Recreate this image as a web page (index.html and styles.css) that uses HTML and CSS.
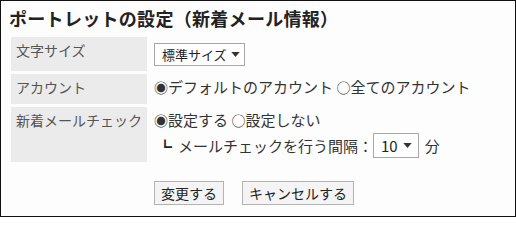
FILE: index.html
```html
<!DOCTYPE html>
<html lang="ja">
<head>
<meta charset="utf-8">
<title>ポートレットの設定</title>
<link rel="stylesheet" href="styles.css">
</head>
<body>
<div class="frame">
  <h1 class="title">ポートレットの設定（新着メール情報）</h1>
  <div class="form">
    <div class="label row1">文字サイズ</div>
    <div class="value row1">
      <span class="select sel-size"><span>標準サイズ</span><svg class="tri" width="10" height="6" viewBox="0 0 10 6"><path d="M0 0H10L5 6Z"/></svg></span>
    </div>
    <div class="label row2">アカウント</div>
    <div class="value row2"><span class="radio">◉</span>デフォルトのアカウント <span class="radio">○</span>全てのアカウント</div>
    <div class="label row3">新着メールチェック</div>
    <div class="value row3">
      <div class="line"><span class="radio">◉</span>設定する <span class="radio">○</span>設定しない</div>
      <div class="line sub"><span class="corner">┗</span><span>メールチェックを行う間隔：</span><span class="select sel-min"><span>10</span><svg class="tri" width="10" height="6" viewBox="0 0 10 6"><path d="M0 0H10L5 6Z"/></svg></span><span class="unit">分</span></div>
    </div>
  </div>
  <div class="buttons">
    <button class="btn" type="button">変更する</button>
    <button class="btn" type="button">キャンセルする</button>
  </div>
</div>
</body>
</html>
```
FILE: styles.css
```css
html, body {
  margin: 0;
  padding: 0;
  background: #fff;
}
body {
  font-family: "Noto Sans CJK JP", "Noto Sans", sans-serif;
  color: #333;
}
.frame {
  box-sizing: border-box;
  width: 516px;
  height: 217px;
  border: 1px solid #111;
  background: #fdfdfd;
  padding: 5px 0 0 8px;
}
.title {
  margin: 0;
  font-size: 18px;
  line-height: 24px;
  font-weight: bold;
  color: #222;
  letter-spacing: 0.3px;
}
.form {
  display: grid;
  grid-template-columns: 136px 1fr;
  column-gap: 3px;
  row-gap: 3px;
  margin: 7px 0 0 2px;
  width: 490px;
}
.label {
  background: #ebebeb;
  color: #555;
  font-size: 14px;
  line-height: 20px;
  padding: 3px 0 0 5px;
}
.value {
  font-size: 15px;
  line-height: 20px;
  padding: 0 0 0 4px;
  color: #333;
  white-space: nowrap;
}
.row1 { height: 34px; box-sizing: border-box; }
.row2 { height: 30px; box-sizing: border-box; }
.row3 { height: 55px; box-sizing: border-box; }
.value.row1 { padding-top: 6px; }
.value.row2 { padding-top: 3px; }
.value.row3 { padding-top: 3px; }
.radio {
  font-size: 14px;
}
.select {
  display: inline-flex;
  align-items: center;
  box-sizing: border-box;
  border: 1px solid #a8a8a8;
  background: #fff;
  color: #222;
  white-space: nowrap;
  vertical-align: middle;
}
.sel-size {
  height: 23px;
  padding: 0 4px 0 7px;
  gap: 4px;
  font-size: 13px;
}
.sel-min {
  height: 25px;
  padding: 0 6px 0 7px;
  gap: 5px;
  font-size: 15px;
}
.tri {
  width: 9px;
  height: 5px;
  fill: #333;
}
.line.sub {
  margin-top: 3px;
  padding-left: 4px;
  display: flex;
  align-items: center;
  height: 25px;
}
.corner {
  font-size: 14px;
  font-weight: bold;
  color: #222;
  margin-right: 6px;
}
.unit {
  margin-left: 6px;
}
.buttons {
  display: flex;
  gap: 18px;
  margin: 19px 0 0 145px;
}
.btn {
  box-sizing: border-box;
  height: 24px;
  padding: 0 6px;
  font-family: "Noto Sans CJK JP", "Noto Sans", sans-serif;
  font-size: 14px;
  line-height: 20px;
  color: #222;
  background: #f4f4f4;
  border: 1px solid #b3b3b3;
  border-radius: 0;
}
```
